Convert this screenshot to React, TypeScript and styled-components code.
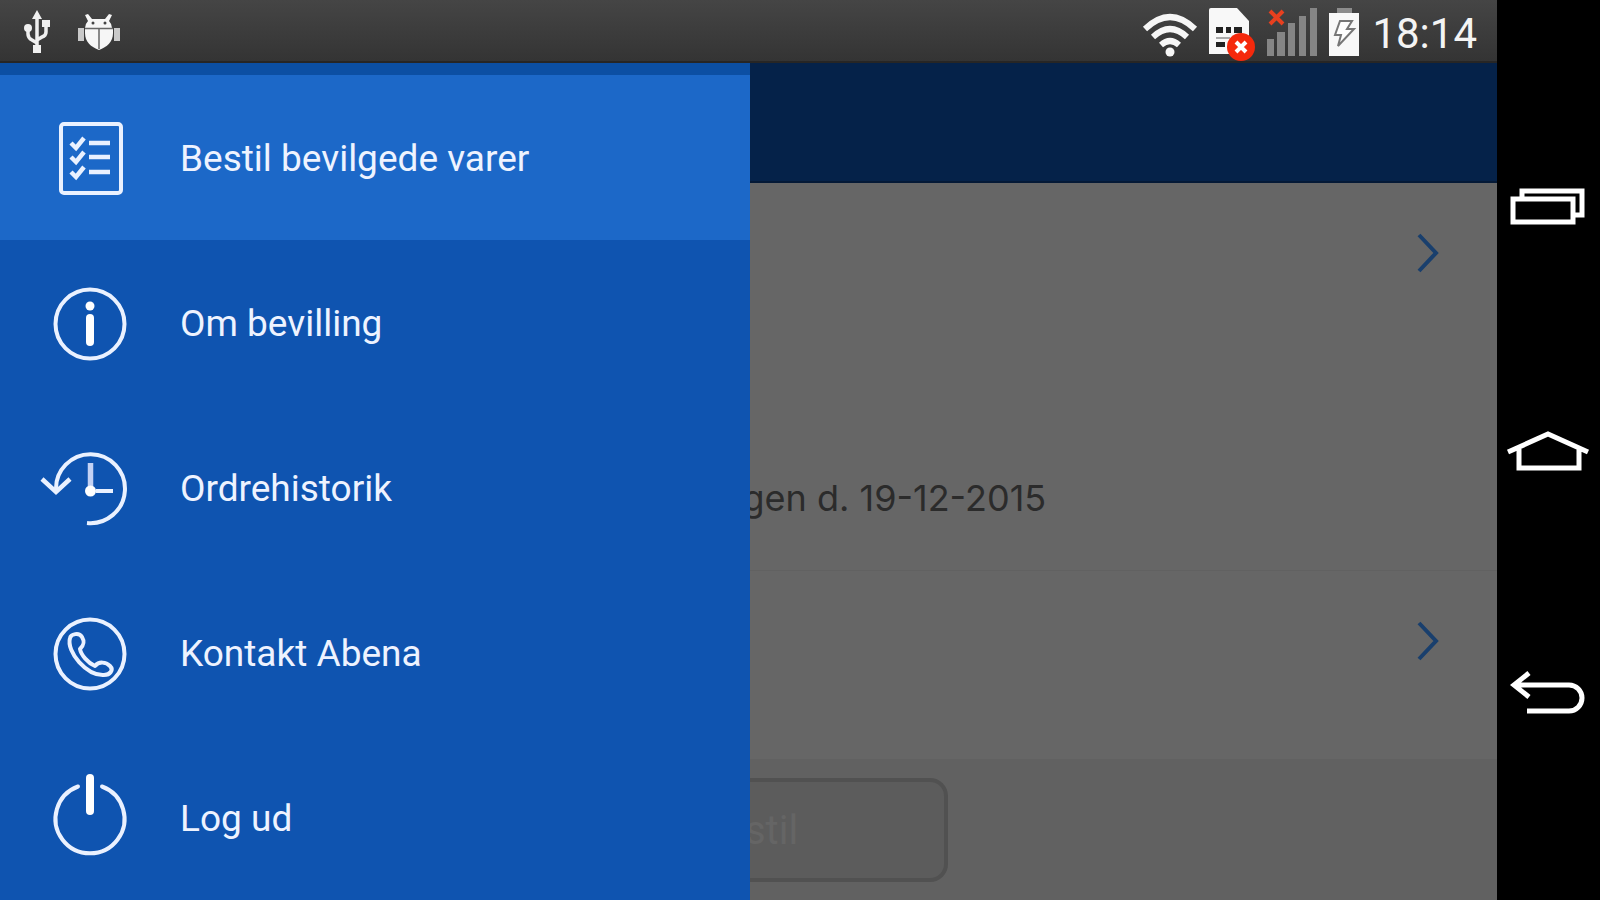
import React from 'react';
import styled, { createGlobalStyle } from 'styled-components';

const GlobalStyle = createGlobalStyle`
  *, *::before, *::after { box-sizing: border-box; }
  body { margin: 0; background: #000; font-family: Roboto, "Liberation Sans", sans-serif; }
  button { font: inherit; border: 0; background: none; cursor: pointer; }
`;

const Device = styled.div`
  display: grid;
  grid-template-columns: minmax(0, 1fr) 103px;
  min-height: 100vh;
  background: #000;
`;

const Screen = styled.div`
  display: flex;
  flex-direction: column;
`;

const StatusBar = styled.header`
  display: flex;
  align-items: center;
  justify-content: space-between;
  height: 63px;
  padding: 2px 20px 0 20px;
  color: #f4f4f4;
  background: linear-gradient(#454545, #343434);
  border-bottom: 2px solid #272625;
`;

const StatusGroup = styled.div<{ $gap: number }>`
  display: flex;
  align-items: center;
  gap: ${(p) => p.$gap}px;
`;

const Clock = styled.time`
  font-size: 42px;
  line-height: 48px;
  padding: 4px 0 0 2px;
`;

const Body = styled.div`
  position: relative;
  flex: 1;
  display: flex;
  flex-direction: column;
`;

const Drawer = styled.nav`
  position: absolute;
  inset: 0 auto 0 0;
  width: 50.1%;
  padding-top: 12px;
  background: #0c4fa3;
`;

const Menu = styled.ul`
  height: 100%;
  margin: 0;
  padding: 0;
  list-style: none;
  background: #0f54b0;
`;

const MenuLink = styled.a<{ $active?: boolean }>`
  display: flex;
  align-items: center;
  gap: 36px;
  height: 165px;
  padding: 2px 0 0 36px;
  color: #eef3ff;
  font-size: 37px;
  line-height: 48px;
  text-decoration: none;
  background: ${(p) => (p.$active ? '#1c68c8' : 'transparent')};
`;

const Page = styled.main`
  flex: 1;
  display: flex;
  flex-direction: column;
  background: #616161;
`;

const TitleBar = styled.div`
  height: 120px;
  background: #052249;
  border-bottom: 2px solid #041936;
`;

const Row = styled.section<{ $height: number }>`
  display: flex;
  flex-direction: column;
  justify-content: space-between;
  min-height: ${(p) => p.$height}px;
  padding: 50px 56px 48px;
  background: #666;
  border-bottom: 1px solid #616161;
`;

const OpenButton = styled.button`
  align-self: flex-end;
  display: flex;
  padding: 0;
`;

const DateLine = styled.p`
  margin: 0;
  padding-left: calc(50% - 6px);
  color: #2b2b2b;
  font-family: Inter, "Liberation Sans", sans-serif;
  font-size: 36px;
  line-height: 48px;
`;

const Footer = styled.footer`
  flex: 1;
  display: flex;
  justify-content: center;
  align-items: flex-start;
  padding: 18px 0;
`;

const OrderButton = styled.button`
  width: 398px;
  height: 104px;
  color: #656565;
  font-size: 40px;
  background: #5c5c5c;
  border: 4px solid #515151;
  border-radius: 18px;
`;

const SystemKeys = styled.aside`
  display: flex;
  flex-direction: column;
  justify-content: center;
`;

const SystemKey = styled.button`
  display: flex;
  align-items: center;
  justify-content: center;
  height: 27vh;
  padding: 0;
`;

const Frame = ({ children }: { children: React.ReactNode }) => (
  <svg width="108" height="96" viewBox="0 0 108 96" fill="none" stroke="#eaf1ff" strokeWidth="4" aria-hidden="true">
    {children}
  </svg>
);

const ListIcon = () => (
  <Frame>
    <rect x="25" y="13" width="60" height="69" rx="3" />
    <path d="M35 32l5 5 8-10M35 46l5 5 8-10M35 61l5 5 8-10" strokeWidth="4.5" />
    <path d="M53 32h21M53 46h21M53 61h21" strokeWidth="4.5" />
  </Frame>
);

const InfoIcon = () => (
  <Frame>
    <circle cx="54" cy="48" r="34.500" />
    <circle cx="54" cy="30" r="4.500" fill="#fff" stroke="none" />
    <path d="M54 42v24" strokeWidth="8" stroke="#fff" strokeLinecap="round" />
  </Frame>
);

const HistoryIcon = () => (
  <Frame>
    <path d="M20 49A34.500 34.500 0 1 1 51 82" />
    <path d="M6 38l14 13 14-13" strokeWidth="4.500" />
    <path d="M54.500 22v24" strokeWidth="5.500" stroke="#c4d2f4" />
    <path d="M60 50h17" strokeWidth="4" />
    <circle cx="54.500" cy="50" r="5.500" fill="#fff" stroke="none" />
  </Frame>
);

const PhoneIcon = () => (
  <Frame>
    <circle cx="54" cy="48" r="34.500" />
    <path
      d="M34 32C35 28 43 26 46 31C49 36 48 39 44 43C45 49 52 57 59 60C63 55 70 56 74 60C78 64 74 69 68 69C51 70 30 46 34 32Z"
      strokeLinejoin="round"
    />
  </Frame>
);

const PowerIcon = () => (
  <Frame>
    <path d="M42 15.500A34.500 34.500 0 1 0 66 15.500" strokeLinecap="round" />
    <path d="M54 7v33" strokeWidth="8" stroke="#fff" strokeLinecap="round" />
  </Frame>
);

const UsbIcon = () => (
  <svg width="34" height="46" viewBox="0 0 34 46" fill="none" stroke="#f0f0f0" strokeWidth="3.500" aria-hidden="true">
    <path d="M17 8v30M8 20v5q0 4 4 6l5 3M26 16v7q0 4-4 5l-5 3" />
    <path d="M17 1l5 9H12zM13 36h8v8h-8zM22 11h8v7h-8z" fill="#f0f0f0" stroke="none" />
    <circle cx="8" cy="19" r="4" fill="#f0f0f0" stroke="none" />
  </svg>
);

const BugIcon = () => (
  <svg width="46" height="42" viewBox="0 0 46 42" fill="#f6f6f6" aria-hidden="true">
    <path d="M9 4l3-1 4 5h13l4-5 3 1-3 6q3 3 3 7H9q0-4 3-7z" />
    <path d="M9 18h28v4c0 9-6 14-14 17C15 36 9 31 9 22z" />
    <path d="M2 17h6v13H2zM38 17h6v13h-6z" fill="#c9c9c9" />
    <path d="M9 17.500h28M23 18v20" stroke="#666" strokeWidth="1.500" />
    <circle cx="17" cy="12" r="1.500" fill="#444" />
    <circle cx="29" cy="12" r="1.500" fill="#444" />
  </svg>
);

const WifiIcon = () => (
  <svg width="56" height="52" viewBox="0 -6 56 52" fill="none" stroke="#f6f6f6" strokeWidth="6" aria-hidden="true">
    <path d="M3 17Q28-7 53 17M11 25Q28 9 45 25M19 33Q28 25 37 33" />
    <circle cx="28" cy="40" r="4.500" fill="#f6f6f6" stroke="none" />
  </svg>
);

const SimIcon = () => (
  <svg width="48" height="60" viewBox="0 -6 48 60" aria-hidden="true">
    <path d="M3 0h26l12 13v33H1V2q0-2 2-2z" fill="#f8f8f8" />
    <path d="M8 19h7v6H8zM18 19h5v6h-5zM26 19h8v6h-8zM8 34h9v5H8z" fill="#222" />
    <path d="M8 30h14" stroke="#aaa" strokeWidth="2" />
    <circle cx="33" cy="39" r="14" fill="#f5290c" />
    <path d="M28 34l10 10M38 34L28 44" stroke="#fff" strokeWidth="4" />
  </svg>
);

const SignalIcon = () => (
  <svg width="52" height="48" viewBox="0 0 52 48" aria-hidden="true">
    <path d="M1 31h7v17H1zM11 24h8v24h-8zM22 15h7v33h-7zM33 8h7v40h-7zM44 0h7v48h-7z" fill="#858585" />
    <path d="M4 3l13 13M17 3L4 16" stroke="#e8401f" strokeWidth="4" />
  </svg>
);

const BatteryIcon = () => (
  <svg width="32" height="50" viewBox="0 0 32 50" aria-hidden="true">
    <path d="M9 1h15v5H9z" fill="#8c8c8c" />
    <path d="M1 6h30v43H1z" fill="#f8f8f8" />
    <path d="M12 14h12l-5 8h7L10 39l3-11H7z" fill="#fff" stroke="#777" strokeWidth="2" />
  </svg>
);

const Chevron = () => (
  <svg width="24" height="40" viewBox="0 0 24 40" fill="none" stroke="#193f6d" strokeWidth="4" aria-hidden="true">
    <path d="M2 2l17 18L2 38" />
  </svg>
);

const KeyIcon = ({ children }: { children: React.ReactNode }) => (
  <svg width="86" height="48" viewBox="0 0 86 48" fill="none" stroke="#fff" strokeWidth="5" aria-hidden="true">
    {children}
  </svg>
);

const items = [
  { label: 'Bestil bevilgede varer', Icon: ListIcon },
  { label: 'Om bevilling', Icon: InfoIcon },
  { label: 'Ordrehistorik', Icon: HistoryIcon },
  { label: 'Kontakt Abena', Icon: PhoneIcon },
  { label: 'Log ud', Icon: PowerIcon },
];

export default function App() {
  return (
    <Device>
      <GlobalStyle />
      <Screen>
        <StatusBar>
          <StatusGroup $gap={22}>
            <UsbIcon />
            <BugIcon />
          </StatusGroup>
          <StatusGroup $gap={10}>
            <WifiIcon />
            <SimIcon />
            <SignalIcon />
            <BatteryIcon />
            <Clock>18:14</Clock>
          </StatusGroup>
        </StatusBar>
        <Body>
          <Page>
            <TitleBar />
            <Row $height={388}>
              <OpenButton aria-label="Åbn"><Chevron /></OpenButton>
              <DateLine>gen d. 19-12-2015</DateLine>
            </Row>
            <Row $height={189}>
              <OpenButton aria-label="Åbn"><Chevron /></OpenButton>
            </Row>
            <Footer>
              <OrderButton>Bestil</OrderButton>
            </Footer>
          </Page>
          <Drawer>
            <Menu>
              {items.map(({ label, Icon }, i) => (
                <li key={label}>
                  <MenuLink href="#" $active={i === 0}>
                    <Icon />
                    {label}
                  </MenuLink>
                </li>
              ))}
            </Menu>
          </Drawer>
        </Body>
      </Screen>
      <SystemKeys>
        <SystemKey aria-label="Seneste apps">
          <KeyIcon>
            <path d="M7 16h60v23H7zM16 15V8h60v24h-8" />
          </KeyIcon>
        </SystemKey>
        <SystemKey aria-label="Hjem">
          <KeyIcon>
            <path d="M2 26L42 8l40 18M13 23v19h60V23" />
          </KeyIcon>
        </SystemKey>
        <SystemKey aria-label="Tilbage">
          <KeyIcon>
            <path d="M23 4L8 16l15 12M10 16h53a13 13 0 0 1 0 26H21" />
          </KeyIcon>
        </SystemKey>
      </SystemKeys>
    </Device>
  );
}
